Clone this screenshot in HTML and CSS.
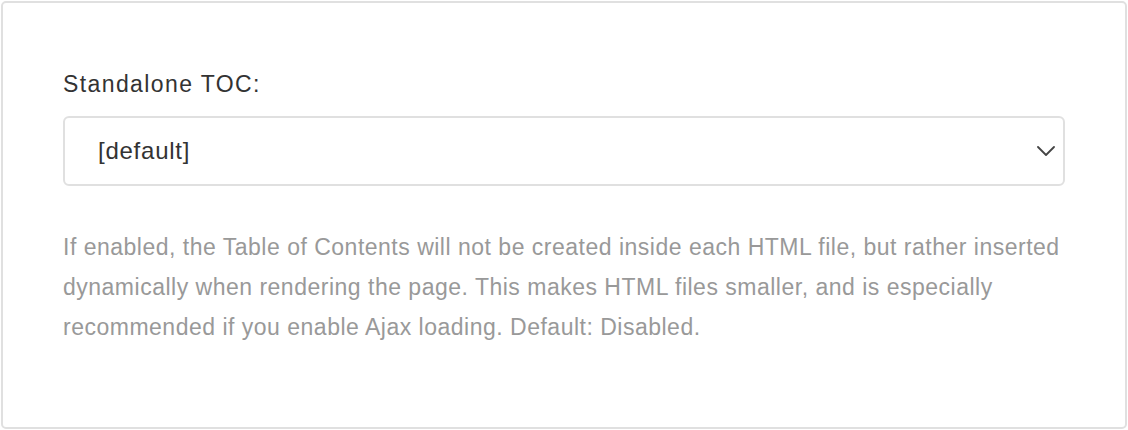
FILE: index.html
```html
<!DOCTYPE html>
<html>
<head>
<meta charset="utf-8">
<link rel="stylesheet" href="styles.css">
</head>
<body>
<div class="card">
  <label class="label" for="toc">Standalone TOC:</label>
  <div class="select">
    <span class="select-value">[default]</span>
    <svg class="chevron" width="18" height="10" viewBox="0 0 18 10"><path d="M1 1 L9 9 L17 1" fill="none" stroke="#444" stroke-width="1.8" stroke-linecap="round" stroke-linejoin="round"/></svg>
  </div>
  <p class="help">If enabled, the Table of Contents will not be created inside each HTML file, but rather inserted dynamically when rendering the page. This makes HTML files smaller, and is especially recommended if you enable Ajax loading. Default: Disabled.</p>
</div>
</body>
</html>
```
FILE: styles.css
```css
html, body {
  margin: 0;
  padding: 0;
  background: #fff;
}
body {
  padding: 1px;
  font-family: "Liberation Sans", Arial, sans-serif;
}
.card {
  box-sizing: border-box;
  height: 428px;
  border: 2px solid #e0e0e0;
  border-radius: 5px;
  padding: 68px 60px 0 60px;
}
.label {
  display: block;
  font-size: 23px;
  letter-spacing: 1.4px;
  line-height: 26px;
  color: #333;
}
.select {
  box-sizing: border-box;
  margin-top: 19px;
  height: 70px;
  border: 2px solid #e0e0e0;
  border-radius: 6px;
  display: flex;
  align-items: center;
  justify-content: space-between;
  padding: 0 8px 0 33px;
}
.select-value {
  font-size: 24px;
  letter-spacing: 0.75px;
  color: #333;
}
.chevron {
  display: block;
}
.help {
  margin: 41px 0 0 0;
  font-size: 23px;
  letter-spacing: 0.5px;
  line-height: 40px;
  color: #999;
}
```
